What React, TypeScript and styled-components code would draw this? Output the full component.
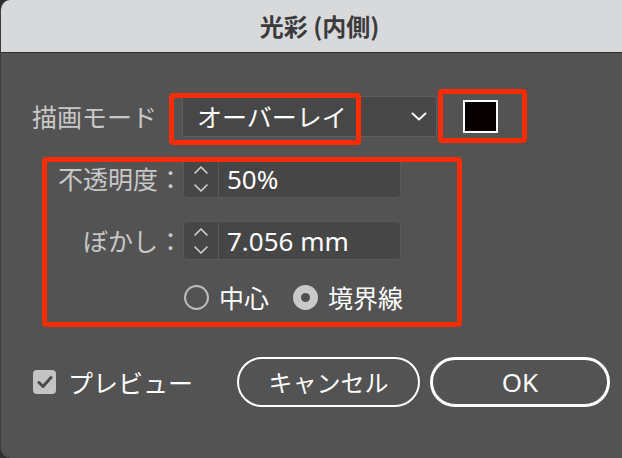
import React from 'react';
import styled, { createGlobalStyle } from 'styled-components';

const RED = '#fd2b00';

const GlobalStyle = createGlobalStyle`
  html, body { margin: 0; padding: 0; background: #2e2e2e; overflow: hidden; }
  body { font-family: "Noto Sans CJK JP", "Noto Sans", sans-serif; }
  #root { width: 622px; height: 458px; overflow: hidden; }
`;

const Window = styled.div`
  width: 638px;
  height: 458px;
  background: #535353;
  border-radius: 10px;
  border-left: 1px solid #3e3e3e;
  box-sizing: border-box;
  overflow: hidden;
  display: flex;
  flex-direction: column;
`;

const TitleBar = styled.div`
  height: 52px;
  flex: none;
  background: #d8d9db;
  border-bottom: 1px solid #2f2f2f;
  display: flex;
  align-items: center;
  justify-content: center;
  font-size: 24px;
  font-weight: 700;
  color: #3b3b3b;
  line-height: 1;
`;

const Body = styled.div`
  padding: 36px 28px 0 31px;
  display: flex;
  flex-direction: column;
`;

const ModeRow = styled.div`
  display: flex;
  align-items: center;
  height: 54px;
`;

const Label = styled.span`
  font-size: 25px;
  line-height: 1;
  color: #c8c8c8;
  white-space: nowrap;
`;

const ModeLabel = styled(Label)`
  margin-right: 25px;
`;

const Dropdown = styled.div`
  position: relative;
  width: 255px;
  height: 41px;
  box-sizing: border-box;
  background: #474747;
  border: 1px solid #5e5e5e;
  border-radius: 3px;
  display: flex;
  align-items: center;
  justify-content: space-between;
  padding: 0 9px 0 14px;
  color: #ffffff;
  font-size: 25px;
  line-height: 1;
`;

const Highlight = styled.div<{ $top: number; $left: number; $w: number; $h: number }>`
  position: absolute;
  top: ${(p) => p.$top}px;
  left: ${(p) => p.$left}px;
  width: ${(p) => p.$w}px;
  height: ${(p) => p.$h}px;
  border: 5px solid ${RED};
  border-radius: 4px;
  box-sizing: border-box;
  pointer-events: none;
`;

const SwatchFrame = styled.div`
  margin-left: 1px;
  width: 89px;
  height: 54px;
  box-sizing: border-box;
  border: 5px solid ${RED};
  border-radius: 4px;
  display: flex;
  align-items: center;
  padding-left: 20px;
`;

const Swatch = styled.div`
  width: 35px;
  height: 33px;
  box-sizing: border-box;
  background: #060000;
  border: 2px solid #ffffff;
`;

const Group = styled.div`
  position: relative;
  margin: 14px 0 0 10px;
  width: 420px;
  height: 170px;
  box-sizing: border-box;
  padding-top: 2px;
  display: flex;
  flex-direction: column;
  gap: 23px;
`;

const FieldRow = styled.div`
  display: grid;
  grid-template-columns: 141px 218px;
  align-items: center;
`;

const FieldLabel = styled(Label)`
  text-align: right;
`;

const Field = styled.div`
  height: 39px;
  box-sizing: border-box;
  background: #464646;
  border: 1px solid #5a5a5a;
  border-radius: 4px;
  display: flex;
  align-items: stretch;
`;

const Stepper = styled.div`
  width: 34px;
  flex: none;
  border-right: 1px solid #5a5a5a;
  display: flex;
  align-items: center;
  justify-content: center;
`;

const Value = styled.span`
  display: flex;
  align-items: center;
  padding-left: 8px;
  font-family: "Noto Sans", "Noto Sans CJK JP", sans-serif;
  font-size: 26px;
  color: #ffffff;
  line-height: 1;
`;

const RadioRow = styled.div`
  margin: 2px 0 0 142px;
  display: flex;
  align-items: center;
  height: 25px;
`;

const RadioOption = styled.div`
  display: flex;
  align-items: center;
  gap: 10px;
  margin-right: 24px;
  font-size: 25px;
  line-height: 1;
  color: #ffffff;
`;

const RadioDot = styled.span<{ $checked?: boolean }>`
  width: 25px;
  height: 25px;
  box-sizing: border-box;
  border-radius: 50%;
  border: ${(p) => (p.$checked ? 'none' : '2px solid #bcbcbc')};
  background: ${(p) => (p.$checked ? '#c9c9c9' : 'transparent')};
  display: flex;
  align-items: center;
  justify-content: center;
  &::after {
    content: '';
    display: ${(p) => (p.$checked ? 'block' : 'none')};
    width: 9px;
    height: 9px;
    border-radius: 50%;
    background: #4f4f4f;
  }
`;

const Footer = styled.div`
  margin-top: 30px;
  height: 50px;
  display: flex;
  align-items: center;
`;

const CheckBox = styled.span`
  margin-left: 1px;
  width: 23px;
  height: 24px;
  border-radius: 4px;
  background: #c4c4c4;
  display: flex;
  align-items: center;
  justify-content: center;
`;

const CheckLabel = styled.span`
  margin-left: 12px;
  font-size: 25px;
  line-height: 1;
  color: #ffffff;
`;

const Buttons = styled.div`
  margin-left: auto;
  display: flex;
  gap: 10px;
`;

const Button = styled.button<{ $primary?: boolean; $w: number }>`
  width: ${(p) => p.$w}px;
  height: 50px;
  box-sizing: border-box;
  border-radius: 25px;
  background: transparent;
  border: ${(p) => (p.$primary ? '3px' : '2px')} solid #ffffff;
  color: #ffffff;
  font-family: ${(p) => (p.$primary ? '"Noto Sans", ' : '')}"Noto Sans CJK JP", sans-serif;
  font-size: ${(p) => (p.$primary ? 26 : 24)}px;
  line-height: 1;
  padding: 0;
  display: flex;
  align-items: center;
  justify-content: center;
`;

const StepIcon = () => (
  <svg width="16" height="39" viewBox="0 0 16 39" fill="none">
    <path d="M2 14 L8 8 L14 14" stroke="#d2d2d2" strokeWidth="1.6" strokeLinecap="round" strokeLinejoin="round" />
    <path d="M2 26 L8 32 L14 26" stroke="#d2d2d2" strokeWidth="1.6" strokeLinecap="round" strokeLinejoin="round" />
  </svg>
);

export default function App() {
  return (
    <>
      <GlobalStyle />
      <Window>
        <TitleBar>光彩 (内側)</TitleBar>
        <Body>
          <ModeRow>
            <ModeLabel>描画モード</ModeLabel>
            <Dropdown>
              <span>オーバーレイ</span>
              <svg width="16" height="9" viewBox="0 0 16 9" fill="none">
                <path d="M1.5 1.5 L8 7.5 L14.5 1.5" stroke="#ffffff" strokeWidth="2" strokeLinecap="round" strokeLinejoin="round" />
              </svg>
              <Highlight $top={-4} $left={-14} $w={192} $h={52} />
            </Dropdown>
            <SwatchFrame>
              <Swatch />
            </SwatchFrame>
          </ModeRow>

          <Group>
            <FieldRow>
              <FieldLabel>不透明度：</FieldLabel>
              <Field>
                <Stepper>
                  <StepIcon />
                </Stepper>
                <Value>50%</Value>
              </Field>
            </FieldRow>
            <FieldRow>
              <FieldLabel>ぼかし：</FieldLabel>
              <Field>
                <Stepper>
                  <StepIcon />
                </Stepper>
                <Value>7.056 mm</Value>
              </Field>
            </FieldRow>
            <RadioRow>
              <RadioOption>
                <RadioDot />
                中心
              </RadioOption>
              <RadioOption>
                <RadioDot $checked />
                境界線
              </RadioOption>
            </RadioRow>
            <Highlight $top={0} $left={0} $w={420} $h={170} />
          </Group>

          <Footer>
            <CheckBox>
              <svg width="16" height="14" viewBox="0 0 16 14" fill="none">
                <path d="M2 7.5 L6 11.5 L14 2.5" stroke="#4c4c4c" strokeWidth="3" strokeLinecap="round" strokeLinejoin="round" />
              </svg>
            </CheckBox>
            <CheckLabel>プレビュー</CheckLabel>
            <Buttons>
              <Button $w={183}>キャンセル</Button>
              <Button $primary $w={180}>OK</Button>
            </Buttons>
          </Footer>
        </Body>
      </Window>
    </>
  );
}
